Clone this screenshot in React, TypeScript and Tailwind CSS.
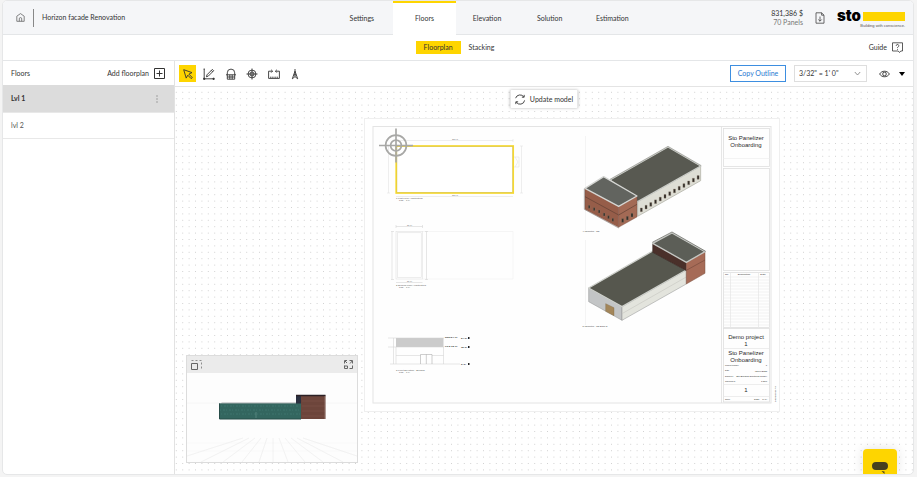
import { useState } from "react";
import type { ReactNode } from "react";

const TABS = ["Settings", "Floors", "Elevation", "Solution", "Estimation"];
const VIEWS = ["Floorplan", "Stacking"];
const FLOORS = ["Lvl 1", "lvl 2"];
const SCALES = [`3/32" = 1' 0"`, `1/8" = 1' 0"`, `1/4" = 1' 0"`];

const DOT_STEPS = [0, 6.4, 12.8, 19.2, 25.6];
const LONG_WINDOWS = Array.from({ length: 13 }, (_, i) => [211 + i * 14.2, 264 - i * 8.1]);
const GABLE_WINDOWS = [[55, 256], [70, 263], [85, 270], [100, 279], [113, 287], [126, 295]];
const SIDE_WINDOWS = [[155, 296], [169, 289], [183, 280]];
const TABLE_ROWS = Array.from({ length: 17 }, (_, i) => 277 + i * 3);

const TOOLS: { name: string; icon: ReactNode }[] = [
  { name: "Select", icon: <path d="M1.7 1.7 10 4.6 6.9 6.1 10.3 9.6 9.1 10.6 5.8 7.2 4.2 10.1Z" /> },
  {
    name: "Draw outline",
    icon: (
      <>
        <path d="M1.2 1v9.8h9.6M3.4 8.8 4 6.8 9.3 1.4l1.4 1.3-5.4 5.4ZM8.3 2.4l1.4 1.4" />
        <path d="M.6 1h1.2M.6 10.2h1.2v1.2H.6ZM10 10.2h1.2v1.2H10Z" fill="currentColor" />
      </>
    ),
  },
  { name: "Openings", icon: <path d="M2.3 6.8V4.8a3.7 3.7 0 0 1 7.4 0v2M1 6.8h10M2.3 6.8v4.4h7.4V6.8M4.8 6.8v4.4M7.2 6.8v4.4M2.3 9h7.4" /> },
  {
    name: "Set origin",
    icon: (
      <>
        <circle cx="6" cy="6" r="3.9" />
        <circle cx="6" cy="6" r="2" />
        <path d="M6 .5v11M.5 6h11" />
      </>
    ),
  },
  { name: "Measure", icon: <path d="M4.4 3.2H.6v7.2h10.8V3.2H7.6M3.2 1.8l1.4 1.4-1.4 1.4M8.8 1.8 7.4 3.2l1.4 1.4M2.8 10.2V8.6M4.9 10.2V8.6M7.1 10.2V8.6M9.2 10.2V8.6" /> },
  { name: "North", icon: <path d="M6 1v3M6 3.2 3.3 10.8 6 8.6l2.7 2.2ZM4.8 6.8h2.4M6 4v4.5" /> },
];

function DotGrid() {
  return (
    <svg className="absolute inset-0 h-full w-full" aria-hidden="true">
      <defs>
        <pattern id="dots" x="20" y="24" width="32" height="32" patternUnits="userSpaceOnUse">
          {DOT_STEPS.map((y) => DOT_STEPS.map((x) => <rect key={`${x}-${y}`} x={x} y={y} width="1" height="1" fill="#d2d2d2" />))}
        </pattern>
      </defs>
      <rect width="100%" height="100%" fill="url(#dots)" />
    </svg>
  );
}

function Windows({ at, w, h }: { at: number[][]; w: number; h: number }) {
  return (
    <>
      {at.map(([x, y]) => (
        <rect key={x} x={x} y={y} width={w} height={h} fill="#2f2c28" stroke="#8b7a68" strokeWidth="1" />
      ))}
    </>
  );
}

function FrontIso() {
  return (
    <g transform="translate(570 120) scale(.3333)" strokeLinejoin="round">
      <path d="M203 243 392 138V182L203 289Z" fill="#deded5" stroke="#a9a99f" strokeWidth="2" />
      <path d="M120 180 294 81 392 138 203 245Z" fill="#585951" stroke="#c9cbc6" strokeWidth="4" />
      <path d="M120 178 294 79 394 137" fill="none" stroke="#77786f" strokeWidth="1.5" />
      <Windows at={LONG_WINDOWS} w={6} h={11} />
      <path d="M45 205 146 259V322L45 268Z" fill="#965d49" stroke="#6e4436" />
      <path d="M146 259 201 228V291L146 322Z" fill="#a36a55" stroke="#6e4436" />
      <path d="M45 205 101 170 201 228 146 259Z" fill="#62645f" stroke="#d4d5d2" strokeWidth="4" />
      <path d="M45 230 146 285 201 253" fill="none" stroke="#5f3f34" strokeWidth="2" />
      <path d="M43 206V268L146 324" fill="none" stroke="#6f6660" strokeWidth="1.5" />
      <Windows at={GABLE_WINDOWS} w={5} h={9} />
      <Windows at={SIDE_WINDOWS} w={6} h={11} />
    </g>
  );
}

function BackIso() {
  return (
    <g transform="translate(570 220) scale(.3333)" strokeLinejoin="round">
      <path d="M56 204 156 260V301L56 245Z" fill="#c3c5c6" stroke="#8e9090" strokeWidth="1.5" />
      <path d="M156 260 349 150V192L156 301Z" fill="#e3e4dd" stroke="#8e9090" strokeWidth="1.5" />
      <path d="M156 281 349 171" stroke="#c8c9c2" strokeWidth="2" />
      <path d="M107 251 132 263V287L107 274Z" fill="#a3865a" stroke="#7c6440" />
      <path d="M56 204 248 93 349 150 156 260Z" fill="#56574e" stroke="#cdcfca" strokeWidth="4" />
      <path d="M248 70 349 127V152L248 97Z" fill="#4a302a" stroke="#352420" strokeWidth="1.5" />
      <path d="M349 127 405 95V160L349 192Z" fill="#a66b57" stroke="#7a4e3f" strokeWidth="1.5" />
      <path d="M349 151 405 120" stroke="#754a3c" strokeWidth="2" />
      <path d="M248 70 306 39 405 95 349 127Z" fill="#5c5e57" stroke="#c5c7c3" strokeWidth="4" />
      <path d="M247 67 306 36 407 94" fill="none" stroke="#55564f" strokeWidth="2" />
    </g>
  );
}

function PlanViews() {
  return (
    <g fontFamily="Liberation Sans, sans-serif" fontSize="2" fill="#555">
      {/* first floor outline */}
      <g fill="none" stroke="#dedede" strokeWidth=".5">
        <path d="M396 140.5H513M396 196.5H513M388.5 146V193M521.5 146V193M396 139v3M513 139v3M387 146h3M387 193h3M520 146h3M520 193h3" />
        <path d="M514 157h5v10h-5M515 157l3 5-3 5" />
      </g>
      <rect x="396.2" y="146" width="117" height="47" fill="#fff" stroke="#f6d92f" strokeWidth="1.7" />
      <rect x="397" y="146.8" width="115.4" height="45.6" fill="none" stroke="#b9ab63" strokeWidth=".3" />
      <g fill="none" stroke="#a8a8a6" strokeWidth="1.7">
        <circle cx="396" cy="145.5" r="10.4" />
        <circle cx="396" cy="145.5" r="5.4" />
        <path d="M379 145.5h34M396 128.5v34" />
      </g>
      <text x="452" y="140.2">130'-0"</text>
      <text x="452" y="196.4">130'-0"</text>
      <text x="396" y="198.6" fontSize="2.4">1 First Floor Architectural</text>
      <text x="399" y="201">3/32" = 1'-0"</text>

      {/* second floor */}
      <g fill="none" stroke="#dcdcdc" strokeWidth=".5">
        <path d="M422 231.5H513V279H422" stroke="#ededed" />
        <rect x="396" y="231.5" width="26.5" height="47.5" />
        <rect x="397.3" y="232.8" width="23.9" height="44.9" />
        <path d="M396 226.5h26.5M396 282.5h26.5M392 231.5v48M426.5 231.5v48M396 225v3M422.5 225v3M391 231.5h3M391 279.5h3M425 231.5h3M425 279.5h3" stroke="#cfcfcf" />
      </g>
      <text x="407" y="226.4">30'-0"</text>
      <text x="407" y="282.4">30'-0"</text>
      <text x="396" y="285.8" fontSize="2.4">2 Second Floor Architectural</text>
      <text x="399" y="288.2">3/32" = 1'-0"</text>

      {/* elevation */}
      <rect x="396" y="338" width="47.5" height="9" fill="#cbcbcb" />
      <g fill="none" stroke="#cfcfcf" strokeWidth=".5">
        <path d="M388 338h56M388 347h56M390 364h70M396 347v17M443.5 347v17M396 355.5h24.5M432 355.5h11.5M393.5 338v26" />
        <path d="M420.5 364v-9.5h11.5V364M426.3 354.5V364" stroke="#9f9f9f" />
      </g>
      <g fontSize="2.4" fill="#222" fontWeight="700">
        <text x="445" y="338">Roof 24'-0"</text>
        <text x="445" y="347.4">Lvl 2 12'-0"</text>
        <text x="461" y="339">24'-0"</text>
        <text x="461" y="348">12'-0"</text>
        <text x="461" y="365">0'-0"</text>
        <path d="M468 337h1.5v2H468ZM468 346h1.5v2H468ZM468 363h1.5v2H468Z" />
      </g>
      <text x="396" y="370.6" fontSize="2.4">3 Front Elevation - Building</text>
      <text x="399" y="373">3/32" = 1'-0"</text>
    </g>
  );
}

function TitleBlock() {
  return (
    <g fontFamily="Liberation Sans, sans-serif" fill="#2b2b2b">
      <g fill="none" stroke="#dfdfdf" strokeWidth=".8">
        <path d="M721.5 126.5V403" />
        <rect x="723.5" y="128.5" width="46" height="38" />
        <path d="M723.5 158.5h46" stroke="#f0f0f0" />
        <rect x="723.5" y="168.5" width="46" height="102" />
        <rect x="723.5" y="272.5" width="46" height="55" />
        <rect x="723.5" y="328.5" width="46" height="73.5" />
        <path d="M730.5 272.5v55M758.5 272.5v55M723.5 348.5h46M723.5 384.5h46M723.5 396.5h46" stroke="#e8e8e8" />
      </g>
      {TABLE_ROWS.map((y) => (
        <path key={y} d={`M723.5 ${y}h46`} stroke="#e6e6e6" strokeWidth=".5" />
      ))}
      <g fontSize="6" textAnchor="middle">
        <text x="746" y="140">Sto Panelizer</text>
        <text x="746" y="147">Onboarding</text>
        <text x="746" y="339">Demo project</text>
        <text x="746" y="346">1</text>
        <text x="746" y="355">Sto Panelizer</text>
        <text x="746" y="362">Onboarding</text>
        <text x="746" y="392">1</text>
      </g>
      <g fontSize="2">
        <text x="725" y="275" fontSize="2.5">No.</text>
        <text x="744" y="275" fontSize="2.5" textAnchor="middle">Description</text>
        <text x="763" y="275" fontSize="2.5" textAnchor="middle">Date</text>
        <text x="725" y="366">Project number</text>
        <text x="725" y="371">Date</text>
        <text x="725" y="376.5">Drawn by</text>
        <text x="725" y="381.5">Checked by</text>
        <text x="725" y="400">Scale</text>
        <g textAnchor="end" fontSize="2.4">
          <text x="767" y="366">1</text>
          <text x="767" y="371.5">02/09/2025</text>
          <text x="767" y="377">Sto Building Solutions GmbH</text>
          <text x="767" y="382">1:200</text>
          <text x="767" y="400">3/32" = 1'-0"</text>
        </g>
        <text transform="translate(775.5 402) rotate(-90)">2/9/2025 9:31 AM</text>
      </g>
    </g>
  );
}

function Sheet() {
  return (
    <svg className="absolute top-[31px] left-[189px] h-[294px] w-[416px]" viewBox="364 118 416 294" role="img" aria-label="Floorplan sheet">
      <rect x="364.5" y="118.5" width="415" height="293" fill="#fff" stroke="#efefef" />
      <rect x="373" y="126.5" width="398" height="276.5" fill="#fefefe" stroke="#e4e4e4" />
      <path d="M585.5 136V230M585.5 240V325" stroke="#ececec" strokeWidth=".6" />
      <PlanViews />
      <FrontIso />
      <BackIso />
      <g fontFamily="Liberation Sans, sans-serif" fontSize="2.4" fill="#444">
        <text x="582.5" y="231.5">4 Isometric - 3D</text>
        <text x="582.5" y="326.5">5 Isometric - 3D Back 2</text>
      </g>
      <TitleBlock />
    </svg>
  );
}

function ModelPreview() {
  return (
    <section className="absolute bottom-[11px] left-[11px] w-[172px] border border-[#dcdcdc] bg-[#fdfdfd]" aria-label="3D preview">
      <div className="flex h-[17px] items-center justify-between bg-[#ebebeb] px-1 text-[#666]">
        <button type="button" aria-label="Dock preview">
          <svg className="size-[11px]" viewBox="0 0 11 11" fill="none" stroke="currentColor">
            <path d="M.5 4.5h6v6h-6Z" />
            <path d="M.5 1.5h10v9" strokeDasharray="2 2" strokeOpacity=".7" />
          </svg>
        </button>
        <button type="button" aria-label="Expand preview">
          <svg className="size-[9px]" viewBox="0 0 9 9" fill="none" stroke="currentColor">
            <path d="M.5 3.5v-3H3M5.5.5h3v3M8.5 5.5v3h-3M.5 5.5v3h3V6h-3M1 1l2 2M6 3.5 8.2 1" />
          </svg>
        </button>
      </div>
      <svg className="block h-[89px] w-full" viewBox="0 0 170 89" aria-label="Building model">
        <path d="M0 30H170" stroke="#f6f6f6" />
        <g stroke="#efefef" strokeWidth=".8">
          <path d="M0 70H170M0 78H170" strokeOpacity=".4" />
          <path d="M56 65 0 83M62 65 14 89M68 65 36 89M74 65 55 89M80 65 72 89M86 65V89M92 65 101 89M98 65 118 89M104 65 136 89M110 65 156 89M116 65 170 83" />
        </g>
        <path d="M109 23h6v8h-6Z" fill="#2b3040" />
        <path d="M32 31 35 29.5H109V31Z" fill="#a9aeb0" />
        <path d="M32 30.5h82V46H32Z" fill="#33665f" />
        <path d="M34 33h78M33 37h80M34 41h79" stroke="#417a72" strokeWidth=".8" strokeDasharray="1 2 2 1" />
        <path d="M32.5 30.5V46H114" fill="none" stroke="#274c48" />
        <path d="M69 39v6" stroke="#6d9891" strokeWidth=".6" />
        <path d="M114 22.5h24.5V46H114Z" fill="#6d453b" />
        <path d="M115 28h23M115 33h23M115 38h23M115 43h23" stroke="#7c5247" strokeWidth=".7" />
        <path d="M109 22.5h29.5" stroke="#2b2025" strokeWidth="1.5" />
        <path d="M138 23V46" stroke="#a98d86" strokeWidth=".6" />
      </svg>
    </section>
  );
}

export default function App() {
  const [tab, setTab] = useState("Floors");
  const [view, setView] = useState("Floorplan");
  const [floor, setFloor] = useState("Lvl 1");
  const [tool, setTool] = useState("Select");

  return (
    <div className="h-screen bg-[#f4f4f4] pr-[3px] pb-[2px] pl-[2px] font-['Lato',sans-serif] text-[7px] leading-[9px] text-[#333]">
      <div className="relative flex h-full flex-col overflow-hidden rounded-[5px] border border-[#e6e7e8] bg-white">
        <header className="flex h-[34px] shrink-0 border-b border-[#e4e6e8] bg-[#f5f6f8]">
          <div className="flex w-[36%] items-center pl-[13px]">
            <a href="#home" aria-label="Home">
              <svg className="size-[9px] text-[#666]" viewBox="0 0 9 9" fill="none" stroke="currentColor" strokeWidth=".8">
                <path d="M.8 3.2 4.5.6 8.2 3.2V8.3H.8ZM3.3 8.3V5.8a1.2 1.2 0 0 1 2.4 0v2.5" />
              </svg>
            </a>
            <span className="ml-2 h-[18px] w-px bg-[#888]" />
            <h1 className="ml-2">Horizon facade Renovation</h1>
          </div>
          <nav className="grid w-[313px] grid-cols-5" aria-label="Project steps">
            {TABS.map((t) => (
              <button
                key={t}
                type="button"
                onClick={() => setTab(t)}
                className={t === tab ? "-mb-px border-t-2 border-[#fed500] bg-white pb-[2px]" : "border-t-2 border-transparent pb-px"}
              >
                {t}
              </button>
            ))}
          </nav>
          <div className="flex flex-1 items-center justify-end pr-[8px]">
            <div className="text-right">
              <p>831,386 $</p>
              <p className="text-[#777]">70 Panels</p>
            </div>
            <button type="button" className="ml-3" aria-label="Download report">
              <svg className="h-[12px] w-[10px] text-[#444]" viewBox="0 0 10 12" fill="none" stroke="currentColor" strokeWidth=".8">
                <path d="M1 .8h5.6L9 3.200v8H1ZM6.600.8v2.400H9M5 4.500v4.700M3.300 7.500 5 9.200l1.700-1.700" />
              </svg>
            </button>
            <div className="ml-3 flex items-start text-black">
              <span className="mt-[3px] font-['Inter',sans-serif] text-[15px] leading-[12px] font-black">sto</span>
              <div className="mt-[5px] ml-[2px] w-[42px]">
                <div className="h-[9px] bg-[#fed500]" />
                <p className="mt-[2px] flex justify-end font-['Liberation_Sans_Narrow',sans-serif] text-[4px] leading-[6px] whitespace-nowrap text-[#555]">Building with conscience.</p>
              </div>
            </div>
          </div>
        </header>

        <div className="grid h-[26px] shrink-0 grid-cols-[1fr_auto_1fr] items-center border-b border-[#e4e6e8] pr-[10px]">
          <span />
          <nav className="flex pl-[12px]" aria-label="Floor views">
            {VIEWS.map((v) => (
              <button key={v} type="button" onClick={() => setView(v)} className={`h-[13px] px-2 ${v === view ? "bg-[#fed500]" : ""}`}>
                {v}
              </button>
            ))}
          </nav>
          <a href="#guide" className="flex items-center gap-[5px] justify-self-end">
            Guide
            <svg className="size-[11px]" viewBox="0 0 11 11" fill="none" stroke="#333" strokeWidth=".8">
              <path d="M.5.8h10V9H8.8L7.5 10.5 6.2 9H.5ZM4.200 3.800a1.300 1.300 0 1 1 1.900 1.100c-.5.300-.6.500-.6 1.100M5.500 6.900v.9" />
            </svg>
          </a>
        </div>

        <div className="flex min-h-0 flex-1">
          <aside className="w-[172px] shrink-0 border-r border-[#e2e2e2]">
            <div className="flex h-[24px] items-center justify-between pr-[9px] pl-2">
              <h2>Floors</h2>
              <button type="button" className="flex items-center gap-[5px]">
                Add floorplan
                <svg className="size-[11px]" viewBox="0 0 11 11" fill="none" stroke="#333">
                  <path d="M.5.5h10v10H.5ZM5.5 2.500v6M2.500 5.500h6" />
                </svg>
              </button>
            </div>
            <ul>
              {FLOORS.map((f) => (
                <li key={f} className={`flex items-center justify-between border-b border-[#e8e8e8] pr-[14px] ${f === floor ? "h-[28px] bg-[#dcdcdc] font-bold" : "h-[26px] text-[#555]"}`}>
                  <button type="button" onClick={() => setFloor(f)} className="h-full flex-1 pl-2 text-left">
                    {f}
                  </button>
                  {f === floor && (
                    <button type="button" aria-label={`${f} options`}>
                      <svg className="h-[8px] w-[6px] text-[#666]" viewBox="0 0 6 8" fill="currentColor">
                        <path d="M2.500.5h1v1h-1ZM2.500 3.500h1v1h-1ZM2.500 6.500h1v1h-1Z" />
                      </svg>
                    </button>
                  )}
                </li>
              ))}
            </ul>
          </aside>

          <main className="flex min-w-0 flex-1 flex-col">
            <div className="flex h-[26px] shrink-0 items-center border-b border-[#e4e4e4] pr-2 pl-[2px]">
              <div className="grid w-[129px] grid-cols-6 justify-items-center" role="toolbar" aria-label="Drawing tools">
                {TOOLS.map((t) => (
                  <button
                    key={t.name}
                    type="button"
                    aria-label={t.name}
                    onClick={() => setTool(t.name)}
                    className={`flex size-[17px] items-center justify-center ${t.name === tool ? "bg-[#fed500]" : ""}`}
                  >
                    <svg className="size-[12px]" viewBox="0 0 12 12" fill="none" stroke="currentColor" strokeWidth=".9" strokeLinejoin="round">
                      {t.icon}
                    </svg>
                  </button>
                ))}
              </div>
              <button type="button" className="ml-auto h-[17px] w-[56px] border border-[#3d8ee0] text-[#1f78d1]">
                Copy Outline
              </button>
              <div className="relative ml-2 w-[73px]">
                <select aria-label="Drawing scale" className="h-[17px] w-full appearance-none border border-[#dedede] bg-white px-1">
                  {SCALES.map((s) => (
                    <option key={s}>{s}</option>
                  ))}
                </select>
                <svg className="pointer-events-none absolute top-[6px] right-[6px] h-[5px] w-[7px]" viewBox="0 0 7 5" fill="none" stroke="#777" strokeWidth=".8">
                  <path d="M.8 1 3.500 4 6.200 1" />
                </svg>
              </div>
              <button type="button" className="ml-3" aria-label="Toggle visibility">
                <svg className="h-[8px] w-[11px]" viewBox="0 0 11 8" fill="none" stroke="#333" strokeWidth=".9">
                  <path d="M.6 4C2.800.3 8.200.3 10.400 4 8.200 7.700 2.800 7.700.6 4Z" />
                  <circle cx="5.5" cy="4" r="1.8" />
                </svg>
              </button>
              <button type="button" className="ml-[9px]" aria-label="Visibility options">
                <svg className="h-[4px] w-[6px]" viewBox="0 0 6 4">
                  <path d="M0 0h6L3 4Z" fill="#000" />
                </svg>
              </button>
            </div>

            <div className="relative flex-1 overflow-hidden">
              <DotGrid />
              <Sheet />
              <ModelPreview />
              <button
                type="button"
                className="absolute top-[3px] left-1/2 flex h-[18px] w-[67px] -translate-x-1/2 items-center justify-center gap-1 rounded-[1px] bg-white whitespace-nowrap shadow-[0_0_3px_rgba(0,0,0,0.3)]"
              >
                <svg className="size-[11px] shrink-0" viewBox="0 0 10 10" fill="none" stroke="#333" strokeWidth=".8">
                  <path d="M1 3.800A4.200 4.200 0 0 1 8.500 2.700M9.200 5.800A4.200 4.200 0 0 1 1.500 7.300M8.800.8v2.100H6.700M1.200 9.200V7.100h2.100" />
                </svg>
                Update model
              </button>
            </div>
          </main>
        </div>

        <button
          type="button"
          aria-label="Open chat"
          className="absolute right-[16px] bottom-0 flex h-[25px] w-[34px] items-end justify-center rounded-t-[4px] bg-[#fed500] shadow-[0_0_12px_rgba(0,0,0,0.12)]"
        >
          <svg className="h-[14px] w-[18px]" viewBox="0 0 18 14">
            <path d="M5 2h8a4 4 0 0 1 0 8H5a4 4 0 0 1 0-8ZM10.500 11l3 .5V14Z" fill="#46401f" />
          </svg>
        </button>
      </div>
    </div>
  );
}
